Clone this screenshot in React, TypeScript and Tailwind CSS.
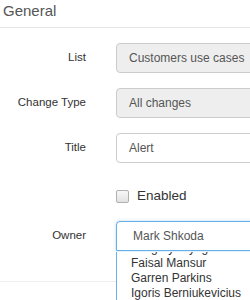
import React from "react";

const owners: string[] = [
   "Gregory Wyngaard",
   "Faisal Mansur",
   "Garren Parkins",
   "Igoris Berniukevicius",
   "Jonas Petraitis",
];

const Row: React.FC<{ label: string; children: React.ReactNode; className?: string }> = ({
   label,
   children,
   className = "",
}) => (
   <div className={`flex items-center h-[30px] ${className}`}>
      <div className="w-[86px] shrink-0 text-right text-[11.5px] text-[#333] whitespace-nowrap">{label}</div>
      <div className="ml-[30px] w-[200px] shrink-0 h-full relative">{children}</div>
   </div>
);

const App: React.FC = () => {
   return (
      <div className="w-[250px] h-[300px] overflow-hidden bg-white font-['Liberation_Sans',Arial,sans-serif]">
         <div className="pl-[3px] pt-[1px] pb-[6px] text-[15px] leading-[20px] text-[#555] border-b border-[#e5e5e5]">
            General
         </div>

         <div className="pt-[15px]">
            <Row label="List" className="mb-[15px]">
               <div className="w-[200px] h-[30px] flex items-center pl-[12px] text-[12px] text-[#555] bg-[#eee] border border-[#ccc] rounded-[4px]">
                  Customers use cases
               </div>
            </Row>
            <Row label="Change Type" className="mb-[15px]">
               <div className="w-[200px] h-[30px] flex items-center pl-[12px] text-[12px] text-[#555] bg-[#eee] border border-[#ccc] rounded-[4px]">
                  All changes
               </div>
            </Row>
            <Row label="Title">
               <div className="w-[200px] h-[30px] flex items-center pl-[12px] text-[12px] text-[#555] bg-white border border-[#ccc] rounded-[4px]">
                  Alert
               </div>
            </Row>

            <div className="flex items-center h-[30px] mt-[18px] mb-[10px] pl-[116px]">
               <span className="w-[13px] h-[13px] shrink-0 rounded-[2px] border border-[#b0b0b0] bg-gradient-to-b from-[#f8f8f8] to-[#e2e2e2]" />
               <span className="ml-[8px] text-[13.5px] text-[#333]">Enabled</span>
            </div>

            <Row label="Owner" className="relative z-10">
               <div className="w-[200px] h-[30px] flex items-center pl-[16px] text-[12px] text-[#555] bg-white border border-[#66afe9] rounded-t-[4px] shadow-[0_0_3px_rgba(102,175,233,0.5)]">
                  Mark Shkoda
               </div>
               <div className="absolute left-0 top-[31px] w-[200px] h-[80px] overflow-hidden bg-white border-l border-[#66afe9]">
                  <div className="-mt-[11px] pl-[14px] text-[12px] leading-[15px] text-[#333] whitespace-nowrap">
                     {owners.map((name) => (
                        <div key={name}>{name}</div>
                     ))}
                  </div>
               </div>
            </Row>
         </div>

         <div className="mt-[30px] border-t border-[#eee] pl-[3px] pt-[14px] text-[15px] leading-[20px] text-[#333]">
            Tracking
         </div>
      </div>
   );
};

export default App;
